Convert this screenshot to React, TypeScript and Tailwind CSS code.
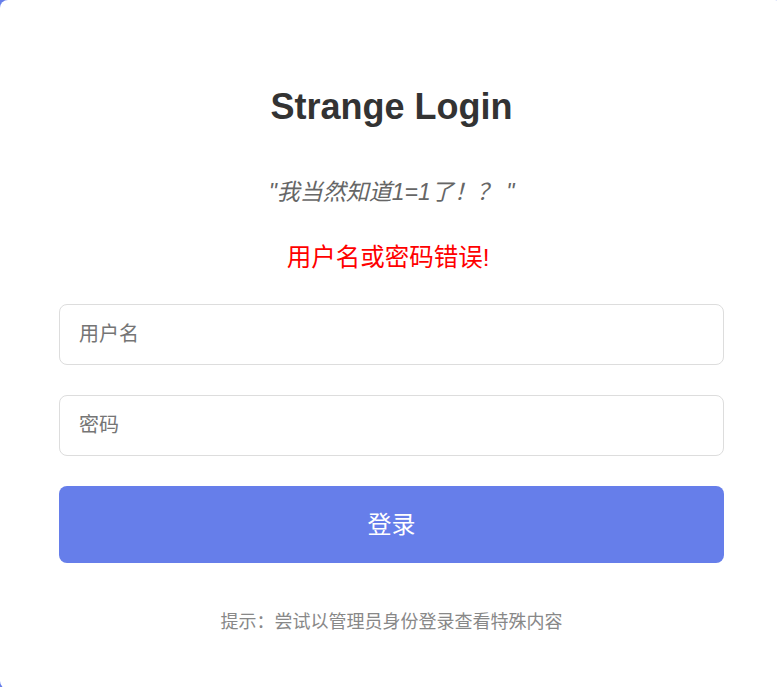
import React from "react";

const font = { fontFamily: '"Liberation Sans", "Noto Sans CJK SC", sans-serif' };

const LoginPage: React.FC = () => {
  return (
    <div className="h-[687px] w-[777px] overflow-hidden bg-[#667eea]" style={font}>
      {/* card */}
      <div className="flex h-[689px] w-[783px] flex-col rounded-lg bg-white px-[59px] pt-[85px]">
        <h1 className="h-[44px] text-center text-[36px] font-bold leading-[44px] text-[#333]">
          Strange Login
        </h1>
        <p className="mt-[47px] h-[32px] text-center text-[23px] italic leading-[32px] text-[#666]">
          "我当然知道1=1了！？ "
        </p>
        <p className="mt-[34px] h-[32px] text-center text-[24.5px] leading-[32px] text-[#ff0000]">
          用户名或密码错误!{"\u00a0"}
        </p>

        <form className="mt-[30px] flex flex-col gap-[30px]" onSubmit={(e) => e.preventDefault()}>
          <input
            type="text"
            placeholder="用户名"
            className="h-[61px] w-full rounded-lg border border-[#ddd] px-[19px] text-[20px] text-[#333] outline-none placeholder:text-[#757575]"
          />
          <input
            type="password"
            placeholder="密码"
            className="h-[61px] w-full rounded-lg border border-[#ddd] px-[19px] text-[20px] text-[#333] outline-none placeholder:text-[#757575]"
          />
          <button
            type="submit"
            className="h-[77px] w-full rounded-lg bg-[#667eea] text-[24px] text-white"
          >
            登录
          </button>
        </form>

        <p className="mt-[46px] h-[26px] text-center text-[18px] leading-[26px] text-[#888]">
          提示：尝试以管理员身份登录查看特殊内容
        </p>
      </div>
    </div>
  );
};

export default LoginPage;
